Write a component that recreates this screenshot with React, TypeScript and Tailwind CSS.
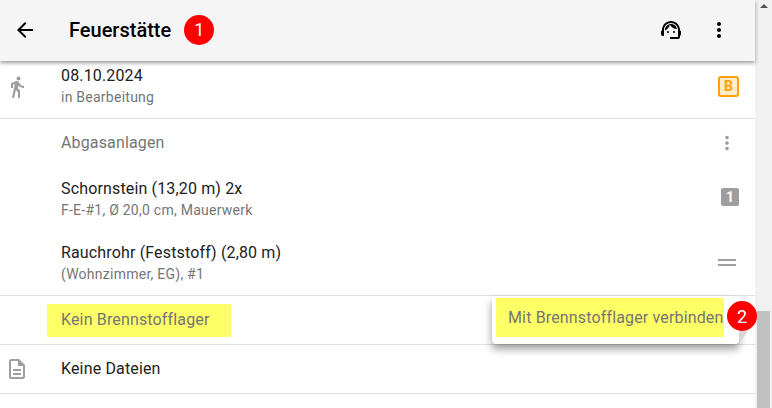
import React from 'react';

const Icon: React.FC<{ d: string; size?: number; className?: string }> = ({ d, size = 24, className }) => (
  <svg width={size} height={size} viewBox="0 0 24 24" fill="currentColor" className={className}>
    <path d={d} />
  </svg>
);

const ARROW_BACK = 'M20 11H7.83l5.59-5.59L12 4l-8 8 8 8 1.41-1.41L7.83 13H20v-2z';
const MORE_VERT =
  'M12 8c1.1 0 2-.9 2-2s-.9-2-2-2-2 .9-2 2 .9 2 2 2zm0 2c-1.1 0-2 .9-2 2s.9 2 2 2 2-.9 2-2-.9-2-2-2zm0 6c-1.1 0-2 .9-2 2s.9 2 2 2 2-.9 2-2-.9-2-2-2z';
const WALK =
  'M13.5 5.5c1.1 0 2-.9 2-2s-.9-2-2-2-2 .9-2 2 .9 2 2 2zM9.8 8.9L7 23h2.1l1.8-8 2.1 2v6h2v-7.5l-2.1-2 .6-3C14.8 12 16.8 13 19 13v-2c-1.9 0-3.5-1-4.3-2.4l-1-1.6c-.4-.6-1-1-1.7-1-.3 0-.5.1-.8.1L6 8.3V13h2V9.6l1.8-.7';
const FILE =
  'M8 16h8v2H8zm0-4h8v2H8zm6-10H6c-1.1 0-2 .9-2 2v16c0 1.1.89 2 1.99 2H18c1.1 0 2-.9 2-2V8l-6-6zm4 18H6V4h7v5h5v11z';
const SUPPORT_AGENT =
  'M21 12.22C21 6.73 16.74 3 12 3c-4.69 0-9 3.65-9 9.28-.6.34-1 .98-1 1.72v2c0 1.1.9 2 2 2h1v-6.1c0-3.87 3.13-7 7-7s7 3.13 7 7V19h-8v2h8c1.1 0 2-.9 2-2v-1.22c.59-.31 1-.92 1-1.61v-2.3c0-.67-.41-1.28-1-1.65zM9 13a1 1 0 1 0 0 2 1 1 0 0 0 0-2zm6 0a1 1 0 1 0 0 2 1 1 0 0 0 0-2zm3-1.97C17.52 8.18 15.04 6 12.05 6c-3.03 0-6.29 2.51-6.03 6.45 2.47-1.01 4.33-3.21 4.86-5.89 1.31 2.63 4 4.44 7.12 4.47z';

const Bubble: React.FC<{ n: number; className?: string }> = ({ n, className = '' }) => (
  <span
    className={`flex h-[30px] w-[30px] items-center justify-center rounded-full bg-[#ff0000] text-[18px] text-white ${className}`}
  >
    {n}
  </span>
);

export default function App() {
  return (
    <div className="flex h-[408px] w-[772px] overflow-hidden bg-white font-['Roboto',sans-serif] text-[16px] tracking-[0.15px] text-[#212121]">
      <div className="relative flex min-w-0 flex-1 flex-col">
        {/* Toolbar */}
        <header className="relative z-10 flex h-[61px] shrink-0 items-center bg-[#f5f5f5] pb-[2px] pl-[13px] pr-[24px] shadow-[0_2px_4px_rgba(0,0,0,0.4)]">
          <Icon d={ARROW_BACK} className="text-black" />
          <h1 className="ml-[32px] text-[20px] font-medium tracking-normal text-black">Feuerstätte</h1>
          <Bubble n={1} className="ml-[13px] tracking-normal" />
          <div className="ml-auto flex items-center gap-[24px] text-black">
            <Icon d={SUPPORT_AGENT} />
            <Icon d={MORE_VERT} />
          </div>
        </header>

        {/* Status */}
        <section className="flex h-[58px] shrink-0 items-center border-b border-[#e0e0e0] pr-[16px]">
          <div className="flex w-[61px] shrink-0 pb-[5px] pl-[5px] text-[#9e9e9e]">
            <Icon d={WALK} />
          </div>
          <div className="min-w-0 flex-1 pb-[7px]">
            <div className="leading-[20px]">08.10.2024</div>
            <div className="mt-[1px] text-[14px] leading-[20px] tracking-[0.25px] text-[#757575]">in Bearbeitung</div>
          </div>
          <span className="mb-[6px] flex h-[21px] w-[21px] items-center justify-center rounded-[3px] border-2 border-[#ffa000] bg-[#ffecc8] text-[14px] font-bold tracking-normal text-[#ffa000]">
            B
          </span>
        </section>

        {/* Abgasanlagen */}
        <section className="h-[177px] shrink-0 border-b border-[#e0e0e0] pl-[61px] pr-[16px]">
          <div className="flex h-[48px] items-center justify-between">
            <span className="text-[#757575]">Abgasanlagen</span>
            <Icon d={MORE_VERT} size={22} className="mr-[1px] text-[#9e9e9e]" />
          </div>
          <div className="flex h-[60px] items-center justify-between pt-[4px]">
            <div className="pt-[1px]">
              <div className="leading-[20px]">Schornstein (13,20 m) 2x</div>
              <div className="mt-[1px] text-[14px] leading-[20px] tracking-[0.25px] text-[#757575]">F-E-#1, Ø 20,0 cm, Mauerwerk</div>
            </div>
            <span className="mb-[4px] flex h-[18px] w-[18px] items-center justify-center rounded-[2px] bg-[#9e9e9e] text-[14px] font-bold tracking-normal text-white">
              1
            </span>
          </div>
          <div className="flex h-[64px] items-center justify-between pt-[8px]">
            <div className="pt-[1px]">
              <div className="leading-[20px]">Rauchrohr (Feststoff) (2,80 m)</div>
              <div className="mt-[1px] text-[14px] leading-[20px] tracking-[0.25px] text-[#757575]">(Wohnzimmer, EG), #1</div>
            </div>
            <div className="mr-[3px] flex w-[18px] flex-col gap-[3px] pb-[1px]">
              <span className="h-[2px] bg-[#9e9e9e]" />
              <span className="h-[2px] bg-[#9e9e9e]" />
            </div>
          </div>
        </section>

        {/* Brennstofflager */}
        <section className="flex h-[49px] shrink-0 items-center border-b border-[#e0e0e0] pl-[47px]">
          <div className="flex h-[33px] w-[184px] items-center bg-[#ffff66] pl-[14px] text-[#757575]">
            Kein Brennstofflager
          </div>
        </section>

        {/* Dateien */}
        <section className="flex h-[49px] shrink-0 items-center border-b border-[#e0e0e0]">
          <div className="flex w-[61px] shrink-0 pl-[5px] text-[#9e9e9e]">
            <Icon d={FILE} />
          </div>
          <span>Keine Dateien</span>
        </section>

        {/* Kontextmenü */}
        <div className="absolute left-[492px] top-[296px] z-20 h-[48px] w-[247px] rounded-[4px] bg-white p-[2px_4px] shadow-[0_5px_8px_rgba(0,0,0,0.4)]">
          <div className="flex h-[39px] w-[228px] items-center bg-[#ffff66] pl-[12px] text-[#757575]">
            Mit Brennstofflager verbinden
          </div>
        </div>
        {/* Grauer Keil unter dem Marker */}
        <svg width="17" height="24" viewBox="0 0 17 24" className="absolute left-[738px] top-[320px] z-20">
          <polygon points="1,24 1,0 17,0" fill="#d6d6d6" />
        </svg>
        <Bubble n={2} className="absolute left-[727px] top-[301px] z-30 tracking-normal" />
      </div>

      {/* Scrollbar */}
      <div className="flex w-[17px] shrink-0 flex-col justify-between bg-[#f1f1f1]">
        <div className="flex h-[17px] justify-center pt-[4px]">
          <span className="h-0 w-0 border-x-[4px] border-b-[4px] border-x-transparent border-b-[#505050]" />
        </div>
        <div className="mx-[2px] h-[97px] bg-[#c1c1c1]" />
      </div>
    </div>
  );
}
